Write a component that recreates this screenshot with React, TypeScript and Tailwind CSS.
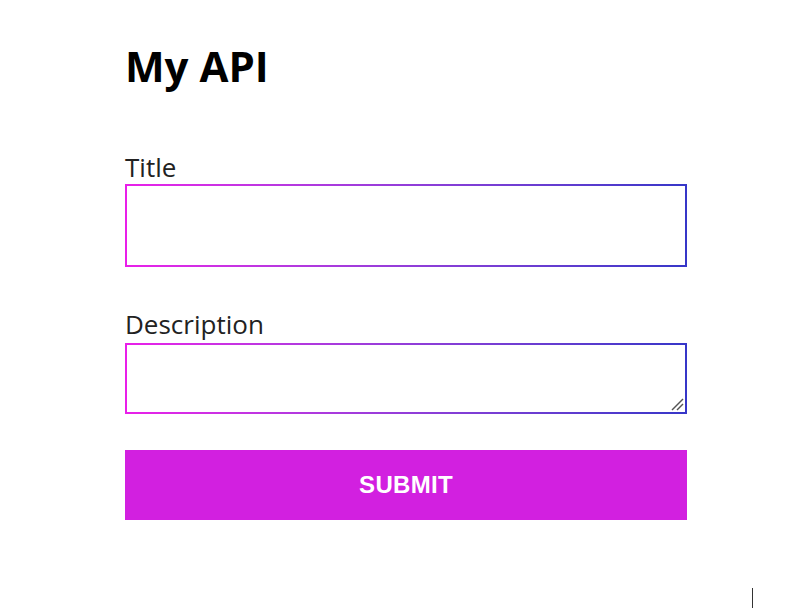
import React from "react";

export default function App() {
  return (
    <div className="relative w-[800px] h-[608px] bg-white overflow-hidden" style={{ fontFamily: '"Open Sans", "Noto Sans", sans-serif' }}>
      <div className="ml-[125px] w-[562px] pt-[45px] flex flex-col">
        <h1 className="text-[42px] leading-[42px] font-bold text-black">My API</h1>
        <label className="mt-[65px] text-[26px] leading-[30px] text-[#222]">Title</label>
        <div className="mt-[2px] h-[83px] p-[2px] bg-linear-to-r from-[#e91ee9] to-[#3636c8]">
          <input className="w-full h-full bg-white outline-none px-2" />
        </div>
        <label className="mt-[42px] text-[26px] leading-[30px] text-[#222]">Description</label>
        <div className="relative mt-[4px] h-[71px] p-[2px] bg-linear-to-r from-[#e91ee9] to-[#3636c8] flex">
          <textarea className="w-full h-full bg-white outline-none px-2 block resize-none" />
          <svg className="absolute right-[3px] bottom-[3px] pointer-events-none" width="14" height="14" viewBox="0 0 14 14">
            <line x1="2" y1="13" x2="13" y2="2" stroke="#555" strokeWidth="1.5" />
            <line x1="7" y1="13" x2="13" y2="7" stroke="#555" strokeWidth="1.5" />
          </svg>
        </div>
        <button className="mt-[36px] h-[70px] bg-[#d220e0] text-white text-[24px] font-bold tracking-[0.3px]" style={{ fontFamily: '"Liberation Sans", Arial, sans-serif' }}>
          SUBMIT
        </button>
      </div>
      <div className="absolute left-[752px] top-[588px] w-px h-[20px] bg-[#333]" />
    </div>
  );
}
